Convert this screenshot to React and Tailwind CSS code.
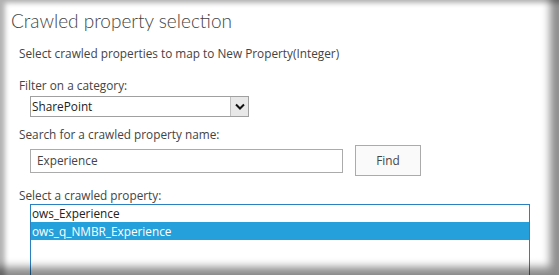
export default function App() {
  return (
    <div className="w-[559px] h-[275px] overflow-hidden bg-white relative font-['Open_Sans',sans-serif] text-[#444]">
      <div className="absolute inset-0 pointer-events-none shadow-[inset_5px_3px_5px_rgba(0,0,0,0.3),inset_-9px_-8px_8px_rgba(0,0,0,0.45)]" />
      <div className="pl-[11px] pt-[7px]">
        <h1 className="font-['Lato',sans-serif] text-[19px] font-light leading-[28px] text-[#444]">Crawled property selection</h1>
      </div>
      <div className="pl-[19px] pt-[10px] text-[11.8px] leading-[17px]">
        <p>Select crawled properties to map to New Property(Integer)</p>
        <p className="mt-[15px]">Filter on a category:</p>
        <div className="ml-[11px] mt-[2px] w-[219px] h-[21px] border border-[#a0a0a0] flex items-center bg-white">
          <span className="flex-1 pl-[1px] text-[#222]">SharePoint</span>
          <span className="w-[18px] h-[19px] border-l border-[#c0c0c0] bg-[#e8e8e8] flex items-center justify-center">
            <svg width="10" height="7" viewBox="0 0 10 7"><path d="M1 1.5 L5 5.5 L9 1.5" fill="none" stroke="#111" strokeWidth="2" /></svg>
          </span>
        </div>
        <p className="mt-[9px]">Search for a crawled property name:</p>
        <div className="flex items-center mt-[2px]">
          <div className="ml-[11px] w-[313px] h-[24px] border border-[#ababab] flex items-center pl-[6px] text-[#444]">Experience</div>
          <div className="ml-[12px] w-[66px] h-[31px] border border-[#ababab] bg-[#fafafa] flex items-center justify-center text-[#444]">Find</div>
        </div>
        <p className="mt-[11px]">Select a crawled property:</p>
        <div className="ml-[11px] w-[500px] h-[80px] border border-[#2a80c0] border-b-0 bg-white text-[#222]">
          <div className="h-[17px] pl-[1px] leading-[17px]">ows_Experience</div>
          <div className="h-[18px] pl-[1px] leading-[18px] bg-[#26a0da] text-white">ows_q_NMBR_Experience</div>
        </div>
      </div>
    </div>
  );
}
